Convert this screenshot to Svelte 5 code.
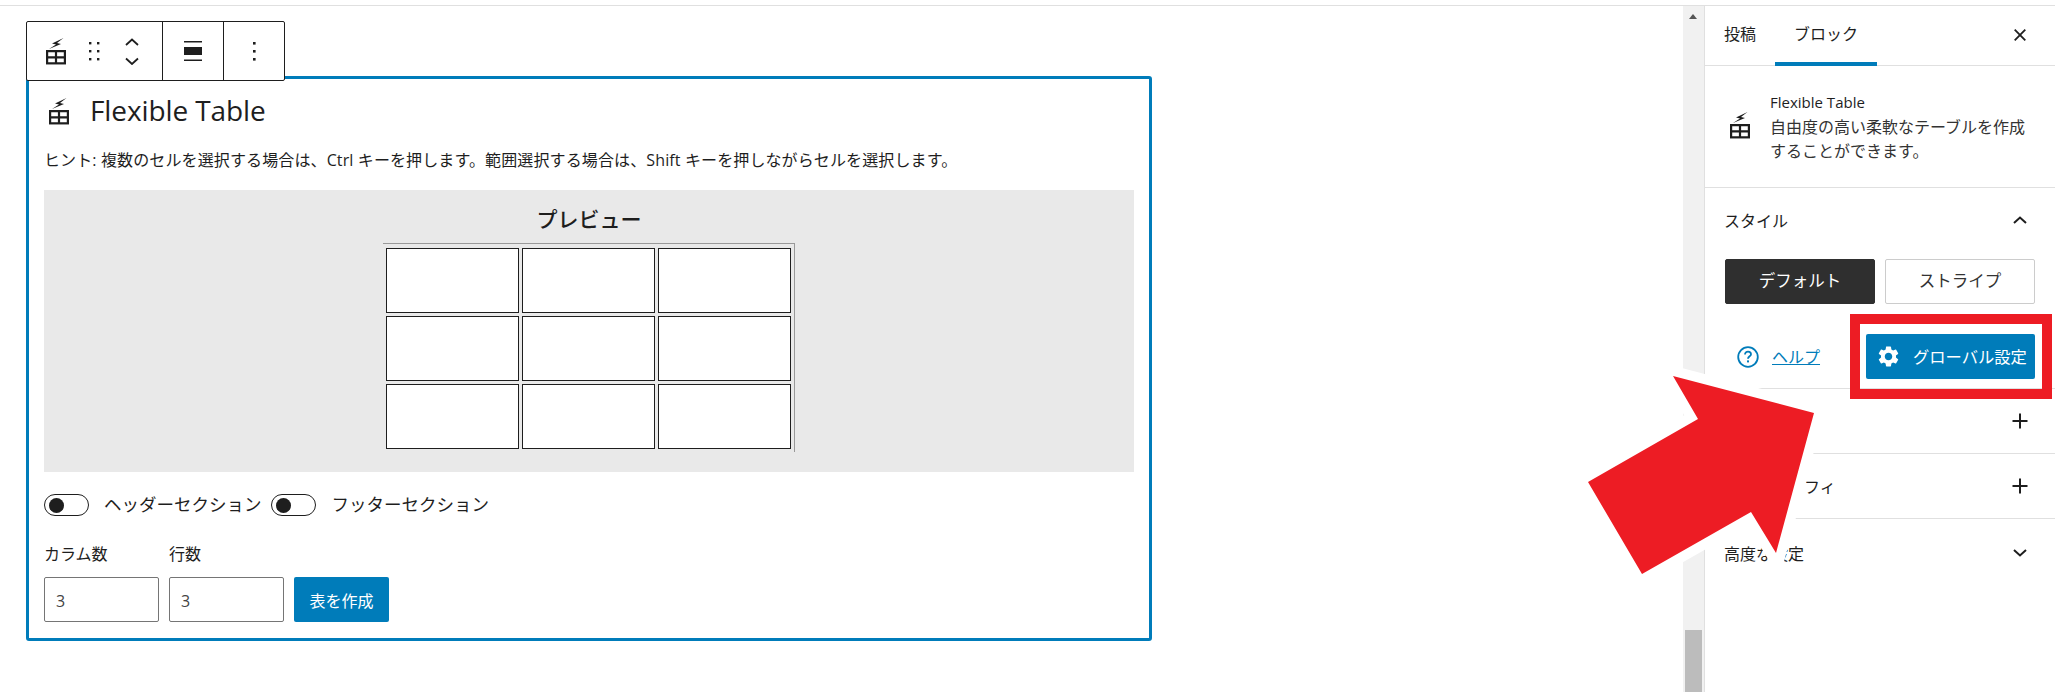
<script>
  const rows = [0, 1, 2];
  const cols = [0, 1, 2];
</script>

{#snippet tableIcon()}
  <svg class="tbl-icon" viewBox="0 0 20 27" aria-hidden="true">
    <path d="M17.5 0 L6 5.5 L10 6.5 L3 11 L15 6 L11 5 Z" fill="#1e1e1e" />
    <path d="M1.1 13.1 H18.9 V25.4 H1.1 Z M10 13.1 V25.4 M1.1 19.3 H18.9" fill="none" stroke="#1e1e1e" stroke-width="2.2" />
    <path d="M0 26.5 H20" stroke="#999" stroke-width="1" />
  </svg>
{/snippet}

{#snippet plus()}
  <svg class="pm" viewBox="0 0 16 16" aria-hidden="true"><path d="M8 0.5 V15.5 M0.5 8 H15.5" stroke="#1e1e1e" stroke-width="2" fill="none" /></svg>
{/snippet}

<div class="page">
  <div class="topline"></div>
  <div class="workspace">
    <main class="main">
      <div class="toolbar">
        <div class="tgroup first">
          <span class="ticon">{@render tableIcon()}</span>
          <svg class="drag" viewBox="0 0 11 19" aria-hidden="true">
            <rect x="0" y="0" width="2.4" height="2.4" /><rect x="8" y="0" width="2.4" height="2.4" />
            <rect x="0" y="8" width="2.4" height="2.4" /><rect x="8" y="8" width="2.4" height="2.4" />
            <rect x="0" y="16" width="2.4" height="2.4" /><rect x="8" y="16" width="2.4" height="2.4" />
          </svg>
          <svg class="mover" viewBox="0 0 14 27" aria-hidden="true">
            <path d="M1 7 L7 1.5 L13 7 M1 20.5 L7 26 L13 20.5" fill="none" stroke="#1e1e1e" stroke-width="1.8" />
          </svg>
        </div>
        <div class="tgroup second">
          <svg class="align" viewBox="0 0 18 20" aria-hidden="true">
            <path d="M0 0 H18 V1.6 H0 Z M0 6 H18 V14 H0 Z M0 18.4 H18 V20 H0 Z" fill="#1e1e1e" />
          </svg>
        </div>
        <div class="tgroup third">
          <svg class="kebab" viewBox="0 0 3 19" aria-hidden="true">
            <rect x="0" y="0" width="2.6" height="2.6" /><rect x="0" y="8" width="2.6" height="2.6" /><rect x="0" y="16" width="2.6" height="2.6" />
          </svg>
        </div>
      </div>

      <section class="block">
        <div class="title">
          {@render tableIcon()}
          <h2>Flexible Table</h2>
        </div>
        <p class="hint">ヒント: 複数のセルを選択する場合は、Ctrl キーを押します。範囲選択する場合は、Shift キーを押しながらセルを選択します。</p>
        <div class="preview">
          <div class="ptitle">プレビュー</div>
          <table>
            <tbody>
              {#each rows as r (r)}
                <tr>
                  {#each cols as c (c)}<td></td>{/each}
                </tr>
              {/each}
            </tbody>
          </table>
        </div>
        <div class="toggles">
          <span class="toggle"><i></i></span>
          <span class="tlabel">ヘッダーセクション</span>
          <span class="toggle two"><i></i></span>
          <span class="tlabel">フッターセクション</span>
        </div>
        <div class="form">
          <label class="flabel" for="cols">カラム数</label>
          <label class="flabel" for="rows">行数</label>
          <span></span>
          <input id="cols" value="3" readonly />
          <input id="rows" value="3" readonly />
          <button class="create">表を作成</button>
        </div>
      </section>
    </main>

    <div class="scrollbar">
      <span class="arrow-up"></span>
      <span class="thumb"></span>
    </div>

    <aside class="sidebar">
      <div class="tabs">
        <span class="tab">投稿</span>
        <span class="tab active">ブロック</span>
        <svg class="close" viewBox="0 0 12 12" aria-hidden="true"><path d="M0.7 0.7 L11.3 11.3 M11.3 0.7 L0.7 11.3" stroke="#1e1e1e" stroke-width="1.8" fill="none" /></svg>
      </div>
      <div class="info">
        <span class="info-icon">{@render tableIcon()}</span>
        <div class="info-text">
          <div class="info-name">Flexible Table</div>
          <div class="info-desc">自由度の高い柔軟なテーブルを作成することができます。</div>
        </div>
      </div>
      <div class="panel style">
        <div class="phead">
          <span>スタイル</span>
          <svg class="chev" viewBox="0 0 14 8" aria-hidden="true"><path d="M1 7 L7 1.5 L13 7" fill="none" stroke="#1e1e1e" stroke-width="2" /></svg>
        </div>
        <div class="stylebtns">
          <button class="sbtn on">デフォルト</button>
          <button class="sbtn">ストライプ</button>
        </div>
        <div class="helprow">
          <span class="help">
            <svg class="qicon" viewBox="0 0 22 22" aria-hidden="true">
              <circle cx="11" cy="11" r="9.8" fill="none" stroke="#007cba" stroke-width="1.8" />
              <path d="M8 8.6 C8 6.6 9.4 5.6 11 5.6 C12.8 5.6 14 6.7 14 8.2 C14 10.3 11 10.4 11 12.8" fill="none" stroke="#007cba" stroke-width="1.8" />
              <rect x="10" y="14.4" width="2" height="2" fill="#007cba" />
            </svg>
            <a href="#help">ヘルプ</a>
          </span>
          <button class="global">
            <svg class="gear" viewBox="0 0 24 24" aria-hidden="true"><path fill="#fff" d="M19.14 12.94c.04-.3.06-.61.06-.94 0-.32-.02-.64-.07-.94l2.03-1.58a.49.49 0 0 0 .12-.61l-1.92-3.32a.49.49 0 0 0-.59-.22l-2.39.96c-.5-.38-1.03-.7-1.62-.94l-.36-2.54a.48.48 0 0 0-.48-.41h-3.84c-.24 0-.43.17-.47.41l-.36 2.54c-.59.24-1.13.57-1.62.94l-2.39-.96c-.22-.08-.47 0-.59.22L2.74 8.87c-.12.21-.08.47.12.61l2.03 1.58c-.05.3-.09.63-.09.94s.02.64.07.94l-2.03 1.58a.49.49 0 0 0-.12.61l1.92 3.32c.12.22.37.29.59.22l2.39-.96c.5.38 1.03.7 1.62.94l.36 2.54c.05.24.24.41.48.41h3.84c.24 0 .44-.17.47-.41l.36-2.54c.59-.24 1.13-.56 1.62-.94l2.39.96c.22.08.47 0 .59-.22l1.92-3.32c.12-.22.07-.47-.12-.61l-2.01-1.58zM12 15.6c-1.98 0-3.6-1.62-3.6-3.6s1.62-3.6 3.6-3.6 3.6 1.62 3.6 3.6-1.62 3.6-3.6 3.6z" /></svg>
            <span class="gtext">グローバル設定</span>
          </button>
        </div>
      </div>
      <div class="panel row"><span>カラー</span>{@render plus()}</div>
      <div class="panel row"><span>タイポグラフィ</span>{@render plus()}</div>
      <div class="panel row last">
        <span>高度な設定</span>
        <svg class="chev" viewBox="0 0 14 8" aria-hidden="true"><path d="M1 1 L7 6.5 L13 1" fill="none" stroke="#1e1e1e" stroke-width="2" /></svg>
      </div>
    </aside>
  </div>

  <svg class="overlay" viewBox="0 0 2057 692" aria-hidden="true">
    <rect x="1855" y="319" width="192" height="75" fill="none" stroke="#ed1c24" stroke-width="10" />
    <polygon points="1814,413 1673,376 1698,419 1588,482 1642,574 1751,512 1776,553" fill="#fff" stroke="#fff" stroke-width="20" stroke-linejoin="miter" />
    <polygon points="1814,413 1673,376 1698,419 1588,482 1642,574 1751,512 1776,553" fill="#ed1c24" />
  </svg>
</div>

<style>
  :global(body) {
    margin: 0;
    background: #fff;
  }
  .page {
    position: relative;
    width: 2057px;
    height: 692px;
    overflow: hidden;
    display: flex;
    flex-direction: column;
    color: #1e1e1e;
    font-family: "Open Sans", "Noto Sans CJK JP", sans-serif;
    font-size: 16px;
  }
  .topline {
    height: 5px;
    width: 2055px;
    border-bottom: 1px solid #e0e0e0;
    flex: none;
  }
  .workspace {
    flex: 1;
    display: flex;
    min-height: 0;
  }
  .main {
    width: 1683px;
    flex: none;
    box-sizing: border-box;
    padding: 15px 0 0 26px;
  }
  .toolbar {
    position: relative;
    z-index: 1;
    display: flex;
    width: 259px;
    height: 60px;
    box-sizing: border-box;
    margin-bottom: -5px;
    background: #fff;
    border: 1px solid #1e1e1e;
    border-radius: 2px;
  }
  .tgroup {
    display: flex;
    align-items: center;
    height: 100%;
    box-sizing: border-box;
  }
  .tgroup + .tgroup {
    border-left: 1px solid #1e1e1e;
  }
  .first {
    width: 135px;
    padding-left: 19px;
  }
  .ticon {
    display: flex;
  }
  .second {
    width: 61px;
    justify-content: center;
  }
  .third {
    flex: 1;
    justify-content: center;
  }
  .tbl-icon {
    width: 20px;
    height: 27px;
    flex: none;
    display: block;
  }
  .drag {
    width: 11px;
    height: 19px;
    margin-left: 23px;
    fill: #1e1e1e;
  }
  .mover {
    width: 14px;
    height: 27px;
    margin-left: 25px;
  }
  .align {
    width: 18px;
    height: 20px;
  }
  .kebab {
    width: 3px;
    height: 19px;
    fill: #1e1e1e;
  }
  .block {
    width: 1126px;
    height: 565px;
    box-sizing: border-box;
    border: 3px solid #007cba;
    border-radius: 3px;
    padding: 19px 15px 16px;
  }
  .title {
    display: flex;
    align-items: center;
    gap: 21px;
    padding-left: 5px;
    height: 27px;
  }
  h2 {
    margin: -3px 0 0;
    font-size: 28px;
    font-weight: 400;
    line-height: 27px;
    letter-spacing: -0.1px;
  }
  .hint {
    margin: 23px 0 18px;
    font-size: 16px;
    letter-spacing: 0.12px;
    line-height: 24px;
    white-space: nowrap;
  }
  .preview {
    height: 282px;
    box-sizing: border-box;
    background: #e9e9e9;
    padding-top: 17px;
  }
  .ptitle {
    text-align: center;
    font-size: 21px;
    font-weight: 500;
    line-height: 24px;
    margin-bottom: 12px;
  }
  table {
    margin: 0 auto;
    border-collapse: separate;
    border-spacing: 3px;
    border-top: 1px solid #999;
    border-right: 1px solid #999;
    padding-top: 1px;
  }
  td {
    width: 133px;
    height: 65px;
    box-sizing: border-box;
    padding: 0;
    background: #fff;
    border: 1px solid #1e1e1e;
  }
  .toggles {
    display: flex;
    align-items: center;
    margin-top: 22px;
    height: 22px;
  }
  .toggle {
    width: 45px;
    height: 22px;
    box-sizing: border-box;
    border: 1px solid #1e1e1e;
    border-radius: 11px;
    display: flex;
    align-items: center;
    padding-left: 4px;
    margin-right: 15px;
    flex: none;
  }
  .toggle.two {
    margin-left: 9px;
    margin-right: 16px;
  }
  .toggle i {
    width: 15px;
    height: 15px;
    border-radius: 50%;
    background: #1e1e1e;
  }
  .tlabel {
    font-size: 17.5px;
    line-height: 22px;
    padding-bottom: 3px;
    white-space: nowrap;
  }
  .form {
    display: grid;
    grid-template-columns: 115px 115px auto;
    column-gap: 10px;
    row-gap: 10px;
    justify-content: start;
    margin-top: 27px;
  }
  .flabel {
    line-height: 22px;
    padding-bottom: 2px;
    font-size: 16px;
  }
  input {
    width: 115px;
    height: 45px;
    box-sizing: border-box;
    border: 1px solid #757575;
    border-radius: 2px;
    padding: 3px 11px 0;
    font: inherit;
    color: #444;
    background: #fff;
  }
  .create {
    width: 95px;
    height: 45px;
    border: 0;
    border-radius: 2px;
    background: #007cba;
    color: #fff;
    font: inherit;
    padding: 0;
  }
  .scrollbar {
    position: relative;
    width: 21px;
    flex: none;
    background: #f1f1f1;
  }
  .arrow-up {
    position: absolute;
    top: 8px;
    left: 6px;
    border-left: 4.5px solid transparent;
    border-right: 4.5px solid transparent;
    border-bottom: 5px solid #555;
  }
  .thumb {
    position: absolute;
    top: 624px;
    bottom: 0;
    left: 2px;
    width: 17px;
    background: #bcbcbc;
  }
  .sidebar {
    width: 351px;
    flex: none;
    box-sizing: border-box;
    border-left: 1px solid #e0e0e0;
  }
  .tabs {
    display: flex;
    align-items: stretch;
    height: 60px;
    box-sizing: border-box;
    border-bottom: 1px solid #e0e0e0;
  }
  .tab {
    display: flex;
    align-items: center;
    padding: 0 19px 1px;
    height: 60px;
    box-sizing: border-box;
    border-bottom: 4px solid transparent;
    line-height: 1;
  }
  .tab.active {
    border-bottom-color: #007cba;
  }
  .close {
    width: 12px;
    height: 12px;
    margin: 23px 29px 0 auto;
  }
  .info {
    display: flex;
    align-items: center;
    height: 122px;
    box-sizing: border-box;
    padding-left: 25px;
    border-bottom: 1px solid #e0e0e0;
    gap: 20px;
  }
  .info-icon {
    display: flex;
    margin-top: -2px;
  }
  .info-text {
    padding-top: 2px;
  }
  .info-name {
    font-size: 15px;
    font-weight: 500;
    line-height: 20px;
    margin-bottom: 3px;
  }
  .info-desc {
    width: 262px;
    line-height: 24px;
    color: #333;
  }
  .panel {
    border-bottom: 1px solid #e0e0e0;
    box-sizing: border-box;
    padding: 0 20px 0 19px;
  }
  .style {
    height: 201px;
  }
  .phead {
    display: flex;
    align-items: center;
    justify-content: space-between;
    height: 64px;
    margin-bottom: 7px;
  }
  .chev {
    width: 14px;
    height: 8px;
    margin-right: 8px;
  }
  .stylebtns {
    display: flex;
    gap: 10px;
    padding-left: 1px;
  }
  .sbtn {
    width: 150px;
    height: 45px;
    box-sizing: border-box;
    border: 1px solid #ccc;
    border-radius: 2px;
    background: #fff;
    color: #333;
    font: inherit;
    font-size: 16.5px;
    padding: 0 0 3px;
  }
  .sbtn.on {
    background: #2f2f2f;
    border-color: #2f2f2f;
    color: #fff;
  }
  .helprow {
    display: flex;
    align-items: center;
    justify-content: space-between;
    margin-top: 30px;
  }
  .help {
    display: flex;
    align-items: center;
    gap: 13px;
    margin-left: 13px;
  }
  .help a {
    margin-top: -2px;
  }
  .qicon {
    width: 22px;
    height: 22px;
  }
  a {
    color: #007cba;
  }
  .global {
    display: flex;
    align-items: center;
    width: 169px;
    height: 45px;
    border: 0;
    border-radius: 2px;
    background: #007cba;
    color: #fff;
    font: inherit;
    padding: 0 0 0 10px;
    gap: 12px;
    white-space: nowrap;
  }
  .gtext {
    font-size: 16.3px;
    margin-top: -2px;
  }
  .gear {
    width: 25px;
    height: 25px;
    flex: none;
  }
  .row {
    display: flex;
    align-items: center;
    justify-content: space-between;
    height: 65px;
  }
  .row.last {
    height: 67px;
    border-bottom: 0;
  }
  .pm {
    width: 16px;
    height: 16px;
    margin-right: 7px;
  }
  .overlay {
    position: absolute;
    inset: 0;
    width: 2057px;
    height: 692px;
    pointer-events: none;
    z-index: 5;
  }
</style>
